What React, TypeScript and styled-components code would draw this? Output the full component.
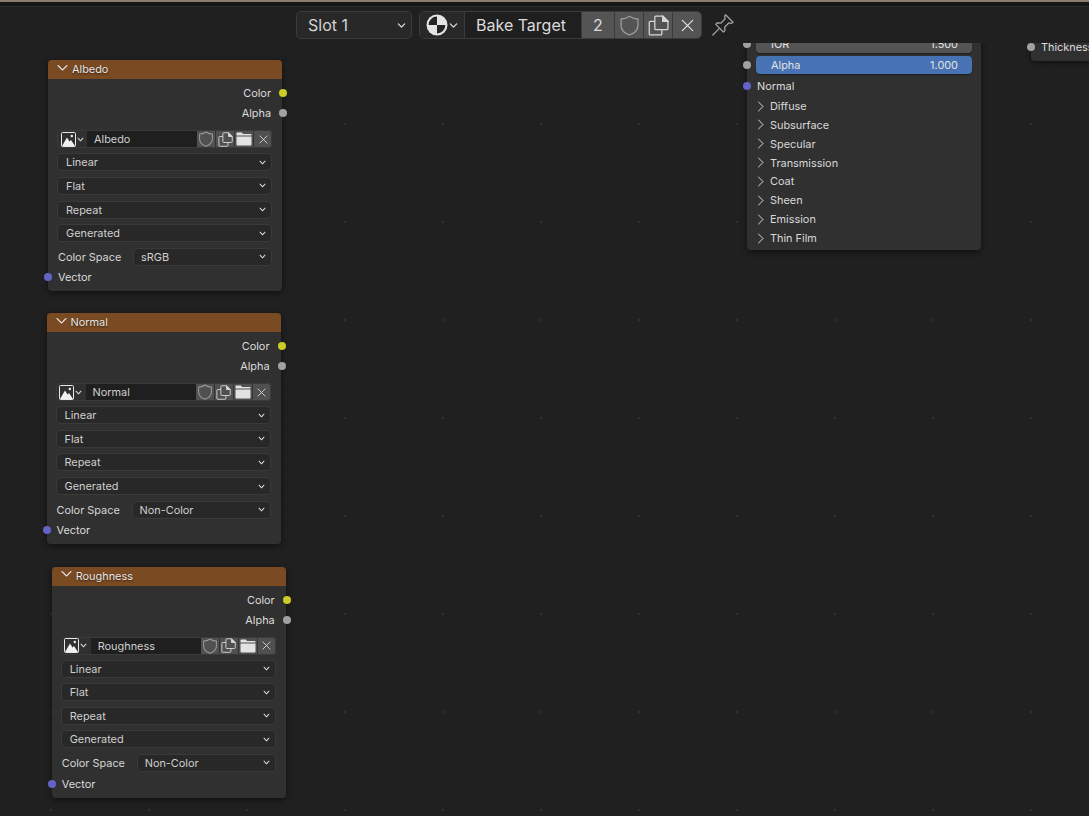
import React from 'react';
import styled, { createGlobalStyle } from 'styled-components';

const Global = createGlobalStyle`
  html, body { margin: 0; padding: 0; background: #202020; }
  body { font-family: Inter, "Liberation Sans", sans-serif; overflow: hidden; }
`;

const Screen = styled.div`
  width: 1089px; height: 816px; display: flex; flex-direction: column;
  background: #202020; overflow: hidden;
`;
const TopEdge = styled.div`
  height: 7px; flex: none;
  background: linear-gradient(#8b7d6c 0, #8b7d6c 2px, #161616 2px, #161616 6px, #2b2b2b 6px);
`;
const HeaderBar = styled.div`
  height: 36px; flex: none; display: flex; align-items: center; padding-left: 296px;
  background: #202020; position: relative; z-index: 2;
`;
const SlotSelect = styled.div`
  width: 116px; height: 28px; box-sizing: border-box; display: flex; align-items: center;
  justify-content: space-between; padding: 0 0 0 11px;
  background: #282828; border: 1px solid #3b3b3b; border-radius: 5px; color: #d4d4d4; font-size: 16px;
`;
const Group = styled.div`
  margin-left: 7px; height: 28px; display: flex; align-items: stretch;
  border: 1px solid #3b3b3b; border-radius: 5px; overflow: hidden; box-sizing: border-box;
`;
const GroupPart = styled.div<{ $w: number; $bg: string }>`
  width: ${p => p.$w}px; background: ${p => p.$bg}; box-sizing: border-box; color: #dcdcdc;
  display: flex; align-items: center; justify-content: center; font-size: 16px; gap: 1px;
  & + & { border-left: 1px solid #3a3a3a; }
`;
const NameField = styled(GroupPart)`
  justify-content: flex-start; padding-left: 11px;
`;
const PinSlot = styled.div`
  margin-left: 9px; display: flex; align-items: center;
`;
const Canvas = styled.div`
  flex: 1; position: relative; overflow: hidden;
  background-color: #202020;
  background-image:
    radial-gradient(circle, #303030 0.9px, transparent 1.3px),
    radial-gradient(circle, #242424 0.7px, transparent 1px);
  background-size: 98px 98px, 19.6px 19.6px;
  background-position: 2px 32px, 2px 12.4px;
`;
const Node = styled.div<{ $x: number; $y: number; $w: number }>`
  position: absolute; left: ${p => p.$x}px; top: ${p => p.$y}px; width: ${p => p.$w}px;
  box-sizing: border-box; background: #303030; border-radius: 4px;
  box-shadow: 0 2px 6px rgba(0,0,0,.55); color: #dcdcdc; font-size: 10.9px;
  padding-bottom: 4px;
`;
const BsdfNode = styled(Node)`
  padding-bottom: 2.3px;
`;
const NodeHead = styled.div`
  height: 19px; box-sizing: border-box; padding: 0 0 1px 9px; background: #7a4a22; border-radius: 4px 4px 0 0;
  display: flex; align-items: center; gap: 4px; color: #e6e6e6; text-shadow: 0 1px 2px rgba(0,0,0,.6);
  margin-bottom: 4px;
`;
const Row = styled.div<{ $right?: boolean }>`
  height: 20px; position: relative; display: flex; align-items: center;
  justify-content: ${p => (p.$right ? 'flex-end' : 'flex-start')};
  padding: 0 11px 0 10px;
`;
const NormalRow = styled(Row)`
  margin: 1px 0 .7px;
`;
const Socket = styled.span<{ $c: string; $side: 'l' | 'r' }>`
  position: absolute; width: 8px; height: 8px; border-radius: 50%; background: ${p => p.$c};
  top: 50%; margin-top: -4px; ${p => (p.$side === 'l' ? 'left: -4px;' : 'right: -5px;')}
`;
const Controls = styled.div`
  display: flex; flex-direction: column; gap: 5.6px; padding: 7px 10px 0 9px;
`;
const ImageRow = styled.div`
  height: 18px; display: flex; align-items: stretch; border-radius: 4px; overflow: hidden;
  outline: 1px solid #3a3a3a; outline-offset: -1px; margin-bottom: -0.6px;
`;
const ImgPart = styled.div<{ $w: number; $bg: string }>`
  width: ${p => p.$w}px; flex: none; box-sizing: border-box; background: ${p => p.$bg};
  display: flex; align-items: center; justify-content: center; gap: 1px; color: #dcdcdc;
  & + & { border-left: 1px solid #333; }
`;
const ImgName = styled.div`
  flex: 1; box-sizing: border-box; background: #1f1f1f; display: flex; align-items: center;
  padding-left: 7px; color: #cfcfcf;
`;
const Select = styled.div`
  height: 18px; box-sizing: border-box;
  display: flex; align-items: center; justify-content: space-between; padding: 0 5px 0 8px;
  background: #282828; border: 1px solid #3a3a3a; border-radius: 4px; color: #cfcfcf;
`;
const SpaceSelect = styled(Select)`
  flex: 1; padding-left: 7px;
`;
const LabelRow = styled.div`
  height: 18px; display: flex; align-items: center; color: #d6d6d6;
`;
const LabelText = styled.span`
  width: 76px; padding-left: 1px; box-sizing: border-box; flex: none;
`;
const VectorRow = styled(Row)`
  margin-top: 1.6px;
`;
const Bar = styled.div<{ $bg: string }>`
  height: 18px; box-sizing: border-box; margin: 0 9px; background: ${p => p.$bg};
  border-radius: 4px; display: flex; align-items: center; justify-content: space-between;
  padding: 0 14px 0 15px; color: #e2e2e2; box-shadow: 0 1px 1px rgba(0,0,0,.4);
`;
const BarRow = styled.div`
  position: relative; height: 21px; display: flex; flex-direction: column; justify-content: center;
`;
const FirstBarRow = styled(BarRow)`
  margin-top: 17px;
`;
const PanelRow = styled.div`
  height: 18.85px; display: flex; align-items: center; gap: 5px; padding-left: 10px; color: #d8d8d8;
`;
const ThickText = styled.div`
  height: 20px; margin-top: 24px; display: flex; align-items: center; padding-left: 10px;
  position: relative; white-space: nowrap;
`;
const SlotChevron = styled.span`
  display: flex; padding-right: 5px;
`;

const Chev = ({ s = 8, c = '#d8d8d8' }: { s?: number; c?: string }) => (
  <svg width={s} height={s} viewBox="0 0 10 10" fill="none" stroke={c} strokeWidth="1.5" style={{ flex: 'none' }}>
    <path d="M1.5 3.2 5 6.8 8.5 3.2" strokeLinecap="round" strokeLinejoin="round" />
  </svg>
);
const HeadChev = () => (
  <svg width="11" height="8" viewBox="0 0 11 8" fill="none" stroke="#e0e0e0" strokeWidth="1.1" style={{ flex: 'none', marginTop: -3 }}>
    <path d="M1 1.5 5.5 6 10 1.5" strokeLinecap="round" strokeLinejoin="round" />
  </svg>
);
const SideChev = () => (
  <svg width="8" height="11" viewBox="0 0 8 11" fill="none" stroke="#d4d4d4" strokeWidth="1" style={{ flex: 'none' }}>
    <path d="M1.5 1 6 5.5 1.5 10" strokeLinecap="round" strokeLinejoin="round" />
  </svg>
);
const Shield = ({ s }: { s: number }) => (
  <svg width={s} height={s} viewBox="0 0 20 20" fill="none" stroke="#9a9a9a" strokeWidth="1.3">
    <path d="M10 1.2 C12.5 3 15.5 3.8 18 3.8 V10 C18 14.5 14 17.6 10 19 C6 17.6 2 14.5 2 10 V3.8 C4.5 3.8 7.5 3 10 1.2Z" strokeLinejoin="round" />
  </svg>
);
const Copy = ({ s }: { s: number }) => (
  <svg width={s} height={s} viewBox="0 0 20 20" fill="none" stroke="#d8d8d8" strokeWidth="1.2">
    <path d="M6.5 6H2.2a1 1 0 0 0-1 1v11a1 1 0 0 0 1 1h10a1 1 0 0 0 1-1v-4" strokeLinejoin="round" />
    <path d="M6.5 2a1 1 0 0 1 1-1h6.5l5 5V13a1 1 0 0 1-1 1H7.5a1 1 0 0 1-1-1Z" strokeLinejoin="round" />
    <path d="M14 1.2L19 6H14Z" fill="#d8d8d8" />
  </svg>
);
const Folder = () => (
  <svg width="16" height="14" viewBox="0 0 16 14">
    <path d="M0.5 1.2a.7.7 0 0 1 .7-.7h4.6l1.2 1.6h7.8a.7.7 0 0 1 .7.7V3.6H.5Z" fill="#e2e2e2" />
    <path d="M.5 4.6h15v8a.8.8 0 0 1-.8.8H1.3a.8.8 0 0 1-.8-.8Z" fill="#e2e2e2" />
  </svg>
);
const Cross = ({ s }: { s: number }) => (
  <svg width={s} height={s} viewBox="0 0 12 12" fill="none" stroke="#e2e2e2" strokeWidth="1.1">
    <path d="M1.2 1.2 10.8 10.8M10.8 1.2 1.2 10.8" strokeLinecap="round" />
  </svg>
);
const ImageIcon = () => (
  <svg width="15" height="15" viewBox="0 0 15 15" fill="none">
    <rect x=".5" y=".5" width="14" height="14" rx="1" stroke="#e8e8e8" strokeWidth="1" />
    <path d="M1 14 6 5.5 8.5 9.5 10 8 14 14Z" fill="#f0f0f0" />
    <circle cx="10.8" cy="4" r="1.2" fill="#f0f0f0" />
  </svg>
);
const Material = () => (
  <svg width="22" height="22" viewBox="0 0 22 22">
    <circle cx="11" cy="11" r="10.5" fill="#e4e4e4" />
    <path d="M11 11V2.6A8.4 8.4 0 0 0 2.6 11Z" fill="#242424" />
    <path d="M11 11H19.4A8.4 8.4 0 0 1 11 19.4Z" fill="#242424" />
  </svg>
);
const Pin = () => (
  <svg width="24" height="24" viewBox="0 0 24 24" fill="none" stroke="#a0a0a0" strokeWidth="1.3" strokeLinejoin="round" strokeLinecap="round">
    <path d="M14.6 1.8 22 9.2 20.4 10.4 18 9.8 13.6 14.2 14 17.6 12.4 19 4.8 11.4 6.2 9.8 9.8 10.2 14.2 5.8 13.6 3.4Z" />
    <path d="M8.2 15.6 1.8 22" />
  </svg>
);

const Y = '#cccc26', G = '#a1a1a1', B = '#6363c7';

const ImageNode = ({ name, space, x, y }: { name: string; space: string; x: number; y: number }) => (
  <Node $x={x} $y={y} $w={234}>
    <NodeHead><HeadChev />{name}</NodeHead>
    <Row $right>Color<Socket $c={Y} $side="r" /></Row>
    <Row $right>Alpha<Socket $c={G} $side="r" /></Row>
    <Controls>
      <ImageRow>
        <ImgPart $w={30} $bg="#303030"><ImageIcon /><Chev s={7} /></ImgPart>
        <ImgName>{name}</ImgName>
        <ImgPart $w={18} $bg="#505050"><Shield s={16} /></ImgPart>
        <ImgPart $w={19} $bg="#505050"><Copy s={15} /></ImgPart>
        <ImgPart $w={19} $bg="#505050"><Folder /></ImgPart>
        <ImgPart $w={19} $bg="#505050"><Cross s={9} /></ImgPart>
      </ImageRow>
      {['Linear', 'Flat', 'Repeat', 'Generated'].map(t => (
        <Select key={t}>{t}<Chev s={7} /></Select>
      ))}
      <LabelRow><LabelText>Color Space</LabelText><SpaceSelect>{space}<Chev s={7} /></SpaceSelect></LabelRow>
    </Controls>
    <VectorRow>Vector<Socket $c={B} $side="l" /></VectorRow>
  </Node>
);

export default function App() {
  return (
    <Screen>
      <Global />
      <TopEdge />
      <HeaderBar>
        <SlotSelect>Slot 1<SlotChevron><Chev s={9} /></SlotChevron></SlotSelect>
        <Group>
          <GroupPart $w={44} $bg="#282828"><Material /><Chev s={9} /></GroupPart>
          <NameField $w={117} $bg="#1f1f1f">Bake Target</NameField>
          <GroupPart $w={33} $bg="#545454">2</GroupPart>
          <GroupPart $w={29} $bg="#545454"><Shield s={21} /></GroupPart>
          <GroupPart $w={29} $bg="#545454"><Copy s={21} /></GroupPart>
          <GroupPart $w={29} $bg="#545454"><Cross s={13} /></GroupPart>
        </Group>
        <PinSlot><Pin /></PinSlot>
      </HeaderBar>
      <Canvas>
        <ImageNode name="Albedo" space="sRGB" x={48} y={17.4} />
        <ImageNode name="Normal" space="Non-Color" x={46.5} y={270.3} />
        <ImageNode name="Roughness" space="Non-Color" x={51.7} y={523.6} />
        <BsdfNode $x={747} $y={-27} $w={234}>
          <FirstBarRow><Bar $bg="#545454">IOR<span>1.500</span></Bar><Socket $c={G} $side="l" /></FirstBarRow>
          <BarRow><Bar $bg="#4772b3">Alpha<span>1.000</span></Bar><Socket $c={G} $side="l" /></BarRow>
          <NormalRow>Normal<Socket $c={B} $side="l" /></NormalRow>
          {['Diffuse', 'Subsurface', 'Specular', 'Transmission', 'Coat', 'Sheen', 'Emission', 'Thin Film'].map(t => (
            <PanelRow key={t}><SideChev />{t}</PanelRow>
          ))}
        </BsdfNode>
        <Node $x={1031} $y={-30} $w={120}>
          <ThickText>Thickness<Socket $c={G} $side="l" /></ThickText>
        </Node>
      </Canvas>
    </Screen>
  );
}
